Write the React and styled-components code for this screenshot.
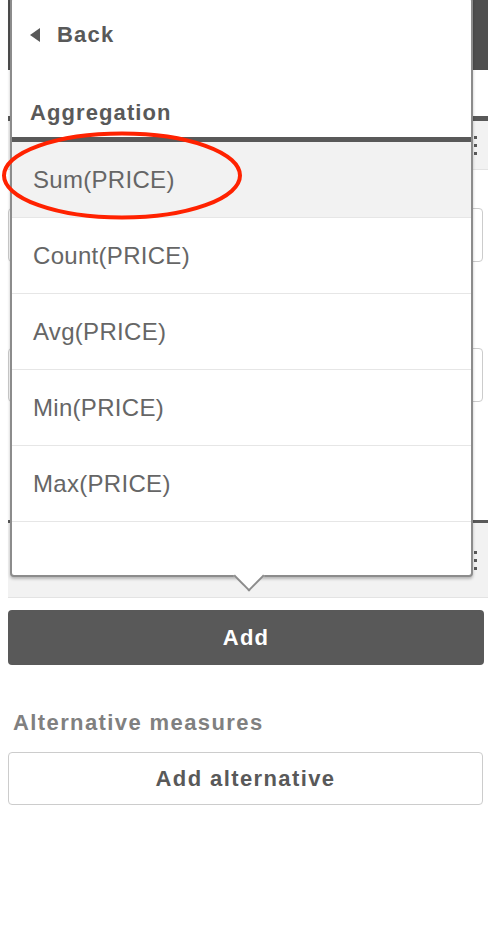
import React from "react";
import styled, { createGlobalStyle } from "styled-components";

const GlobalStyle = createGlobalStyle`
  html, body {
    margin: 0;
    padding: 0;
    background: #ffffff;
    font-family: "Liberation Sans", Arial, sans-serif;
  }
`;

const AGGREGATIONS = ["Sum(PRICE)", "Count(PRICE)", "Avg(PRICE)", "Min(PRICE)", "Max(PRICE)"];

const Page = styled.div`
  position: relative;
  width: 488px;
  height: 942px;
  box-sizing: border-box;
  padding-left: 8px;
  overflow: hidden;
`;

const Header = styled.div`
  height: 70px;
  background: #4f4f4f;
`;

const Section = styled.div`
  margin-top: ${(p) => p.top}px;
  border-top: ${(p) => p.line}px solid #595959;
`;

const SectionHead = styled.div`
  height: ${(p) => p.h}px;
  background: #f2f2f2;
  border-bottom: 1px solid #e3e3e3;
  display: flex;
  align-items: center;
  justify-content: flex-end;
  padding-right: 11px;
`;

const Kebab = styled.div`
  display: flex;
  flex-direction: column;
  gap: 5px;
  span {
    width: 3px;
    height: 3px;
    background: #595959;
  }
`;

const Fields = styled.div`
  display: flex;
  flex-direction: column;
  gap: 86px;
  padding: 38px 5px 118px 0;
`;

const Field = styled.div`
  height: 52px;
  border: 1px solid #cccccc;
  border-radius: 4px;
`;

const AddButton = styled.div`
  margin: 12px 4px 0 0;
  height: 55px;
  border-radius: 4px;
  background: #595959;
  color: #ffffff;
  display: flex;
  align-items: center;
  justify-content: center;
  font-size: 22px;
  font-weight: bold;
  letter-spacing: 1.2px;
`;

const Label = styled.div`
  margin: 45px 0 0 5px;
  height: 26px;
  line-height: 26px;
  color: #808080;
  font-size: 22px;
  font-weight: bold;
  letter-spacing: 1.4px;
`;

const AltButton = styled.div`
  margin: 16px 5px 0 0;
  height: 51px;
  border: 1px solid #cccccc;
  border-radius: 4px;
  display: flex;
  align-items: center;
  justify-content: center;
  color: #595959;
  font-size: 22px;
  font-weight: bold;
  letter-spacing: 1.4px;
`;

const Popover = styled.div`
  position: absolute;
  left: 10px;
  top: -3px;
  width: 463px;
  height: 580px;
  box-sizing: border-box;
  border: 2px solid #8c8c8c;
  border-radius: 4px;
  background: #ffffff;
  box-shadow: 0 2px 3px rgba(0, 0, 0, 0.25);
  display: flex;
  flex-direction: column;
  &::after {
    content: "";
    position: absolute;
    left: 226px;
    bottom: -12px;
    width: 20px;
    height: 20px;
    background: #ffffff;
    border-right: 2px solid #8c8c8c;
    border-bottom: 2px solid #8c8c8c;
    transform: rotate(45deg);
  }
`;

const BackRow = styled.div`
  height: 72px;
  flex-shrink: 0;
  display: flex;
  align-items: center;
  gap: 17px;
  padding-left: 18px;
  color: #595959;
  font-size: 22px;
  font-weight: bold;
  letter-spacing: 1.2px;
`;

const Caret = styled.span`
  width: 0;
  height: 0;
  border-top: 7px solid transparent;
  border-bottom: 7px solid transparent;
  border-right: 10px solid #595959;
`;

const GroupTitle = styled.div`
  height: 71px;
  flex-shrink: 0;
  box-sizing: border-box;
  display: flex;
  align-items: flex-end;
  padding: 0 0 11px 18px;
  border-bottom: 5px solid #595959;
  color: #595959;
  font-size: 22px;
  font-weight: bold;
  letter-spacing: 1.1px;
`;

const Item = styled.div`
  height: 75px;
  flex-shrink: 0;
  display: flex;
  align-items: center;
  padding-left: 21px;
  border-bottom: 1px solid #e6e6e6;
  background: ${(p) => (p.active ? "#f2f2f2" : "#ffffff")};
  color: #666666;
  font-size: 24px;
  letter-spacing: 0.3px;
`;

const Mark = styled.svg`
  position: absolute;
  left: 0;
  top: 126px;
  width: 246px;
  height: 100px;
  pointer-events: none;
`;

export default function App() {
  return (
    <>
      <GlobalStyle />
      <Page>
        <Header />
        <Section top={46} line={5}>
          <SectionHead h={48}>
            <Kebab>
              <span />
              <span />
              <span />
            </Kebab>
          </SectionHead>
          <Fields>
            <Field />
            <Field />
          </Fields>
        </Section>
        <Section top={0} line={3}>
          <SectionHead h={74}>
            <Kebab>
              <span />
              <span />
              <span />
            </Kebab>
          </SectionHead>
        </Section>
        <AddButton>Add</AddButton>
        <Label>Alternative measures</Label>
        <AltButton>Add alternative</AltButton>

        <Popover>
          <BackRow>
            <Caret />
            Back
          </BackRow>
          <GroupTitle>Aggregation</GroupTitle>
          {AGGREGATIONS.map((name, i) => (
            <Item key={name} active={i === 0}>
              {name}
            </Item>
          ))}
        </Popover>

        <Mark viewBox="0 0 246 100">
          <ellipse cx="122" cy="49.5" rx="118" ry="42" fill="none" stroke="#ff2200" strokeWidth="4" />
        </Mark>
      </Page>
    </>
  );
}
